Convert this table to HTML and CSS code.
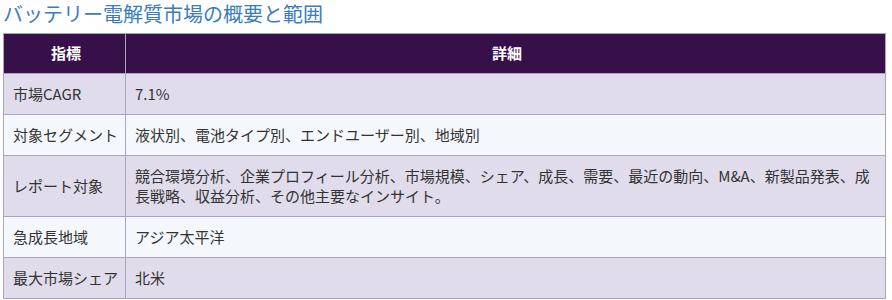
FILE: index.html
```html
<!DOCTYPE html>
<html lang="ja">
<head>
<meta charset="utf-8">
<link rel="stylesheet" href="styles.css">
</head>
<body>
<h2 class="title">バッテリー電解質市場の概要と範囲</h2>
<table class="tbl">
  <colgroup><col class="col1"><col></colgroup>
  <thead>
    <tr><th>指標</th><th>詳細</th></tr>
  </thead>
  <tbody>
    <tr class="odd"><td class="c1">市場CAGR</td><td>7.1%</td></tr>
    <tr class="even"><td class="c1">対象セグメント</td><td>液状別、電池タイプ別、エンドユーザー別、地域別</td></tr>
    <tr class="odd"><td class="c1">レポート対象</td><td>競合環境分析、企業プロフィール分析、市場規模、シェア、成長、需要、最近の動向、M&amp;A、新製品発表、成長戦略、収益分析、その他主要なインサイト。</td></tr>
    <tr class="even"><td class="c1">急成長地域</td><td>アジア太平洋</td></tr>
    <tr class="odd"><td class="c1">最大市場シェア</td><td>北米</td></tr>
  </tbody>
</table>
</body>
</html>
```
FILE: styles.css
```css
html, body {
  margin: 0;
  padding: 0;
  background: #ffffff;
}
body {
  padding: 0 6px 0 3px;
  font-family: "Noto Sans CJK JP", "Noto Sans", sans-serif;
  color: #333333;
}
.title {
  margin: 0 0 5px 0;
  font-size: 20px;
  line-height: 28px;
  font-weight: normal;
  color: #3a7cc0;
}
.tbl {
  width: 883px;
  border-collapse: collapse;
  table-layout: fixed;
  font-size: 15px;
}
.col1 {
  width: 122px;
}
.tbl th, .tbl td {
  border: 1px solid #aaa4bf;
  line-height: 20px;
  padding: 10px 6px 10px 9px;
  text-align: left;
  vertical-align: middle;
}
.tbl th {
  background: #371049;
  color: #ffffff;
  font-weight: bold;
  text-align: center;
  padding: 9px 6px 10px 9px;
}
.c1 {
  white-space: nowrap;
}
.odd td { background: #e0dcec; }
.even td { background: #f4f8fc; }
```
